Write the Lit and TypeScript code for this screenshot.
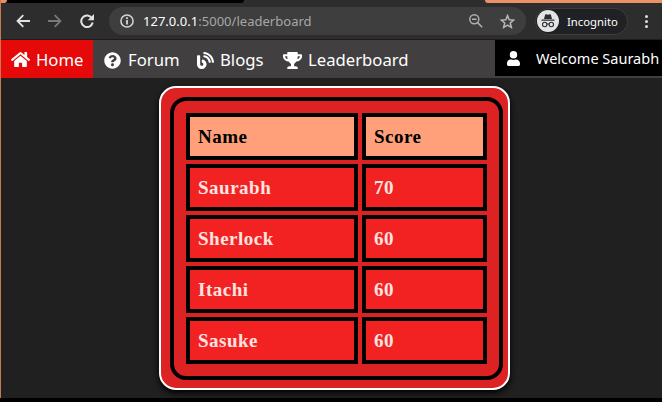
import { LitElement, html, css, svg } from "lit";
import { customElement } from "lit/decorators.js";

const icons = {
  back: svg`<path d="M14 7H1.5M7.3 1.2L1.5 7l5.8 5.8" fill="none" stroke="currentColor" stroke-width="1.8"/>`,
  forward: svg`<path d="M0 7h12.5M6.7 1.2L12.5 7l-5.8 5.8" fill="none" stroke="currentColor" stroke-width="1.8"/>`,
  reload: svg`<path d="M11.9 4.1A5.8 5.8 0 1 0 12.7 8.6" fill="none" stroke="currentColor" stroke-width="2"/><path d="M14 0v6.3H7.7z" fill="currentColor"/>`,
  info: svg`<circle cx="7" cy="7" r="6.1" fill="none" stroke="currentColor" stroke-width="1.5"/><path d="M7 6v4.6M7 3.3v1.6" stroke="currentColor" stroke-width="1.8"/>`,
  zoom: svg`<circle cx="5.3" cy="5.3" r="4.5" fill="none" stroke="currentColor" stroke-width="1.5"/><path d="M8.6 8.6l4.6 4.6M3 5.3h4.6" fill="none" stroke="currentColor" stroke-width="1.5"/>`,
  star: svg`<path d="M7 1.5l1.6 3.9 4.2.3-3.2 2.7 1 4.1L7 10.3l-3.6 2.2 1-4.1L1.2 5.7l4.2-.3z" fill="none" stroke="currentColor" stroke-width="1.4"/>`,
  spy: svg`<circle cx="11" cy="11" r="11" fill="#e4e4e4"/><path d="M7 9l1.1-4.2q.3-.8 1.1-.5l1.8.5 1.800-.5q.8-.3 1.100.5L15 9zM4.500 9.600h13v1.200h-13z" fill="#2b2d30"/><circle cx="7.7" cy="14.5" r="2.2" fill="none" stroke="#2b2d30" stroke-width="1.1"/><circle cx="14.3" cy="14.5" r="2.2" fill="none" stroke="#2b2d30" stroke-width="1.1"/><path d="M9.9 14.2q1.1-.7 2.2 0" fill="none" stroke="#2b2d30"/>`,
  home: svg`<path d="M280.37 148.26L96 300.11V464a16 16 0 0 0 16 16l112.06-.29a16 16 0 0 0 15.92-16V368a16 16 0 0 1 16-16h64a16 16 0 0 1 16 16v95.64a16 16 0 0 0 16 16.05L464 480a16 16 0 0 0 16-16V300L295.67 148.26a12.19 12.19 0 0 0-15.3 0zM571.6 251.47L488 182.56V44.05a12 12 0 0 0-12-12h-56a12 12 0 0 0-12 12v72.61L318.47 43a48 48 0 0 0-61 0L4.34 251.47a12 12 0 0 0-1.6 16.9l25.5 31A12 12 0 0 0 45.15 301l235.22-193.74a12.19 12.19 0 0 1 15.3 0L530.9 301a12 12 0 0 0 16.9-1.6l25.5-31a12 12 0 0 0-1.7-16.93z" fill="currentColor"/>`,
  question: svg`<path d="M504 256c0 137-111 248-248 248S8 393 8 256C8 119.1 119 8 256 8s248 111.1 248 248zM262.7 90c-54.5 0-89.3 23-116.5 63.8-3.5 5.3-2.4 12.4 2.7 16.3l34.7 26.3c5.2 3.9 12.6 3 16.7-2.1 17.9-22.7 30.1-35.8 57.3-35.8 20.4 0 45.7 13.1 45.7 33 0 15-12.4 22.7-32.5 34C247.1 238.5 216 254.9 216 296v4c0 6.6 5.4 12 12 12h56c6.6 0 12-5.4 12-12v-1.3c0-28.5 83.2-29.6 83.2-106.7 0-58-60.2-102-116.5-102zM256 338c-25.4 0-46 20.6-46 46s20.6 46 46 46 46-20.6 46-46-20.6-46-46-46z" fill="currentColor" fill-rule="evenodd"/>`,
  blog: svg`<path d="M172.2 226.8c-14.6-2.9-28.2 8.9-28.2 23.8V301c0 10.2 7.1 18.4 16.7 22 18.2 6.8 31.3 24.4 31.3 45 0 26.5-21.5 48-48 48s-48-21.5-48-48V120c0-13.3-10.7-24-24-24H24c-13.3 0-24 10.7-24 24v248c0 89.5 82.1 160.2 175 140.7 54.4-11.4 98.3-55.4 109.7-109.7 17.4-82.9-37-157.2-112.5-172.2zM209 0c-9.2-.5-17 6.8-17 16v31.6c0 8.5 6.6 15.5 15 15.9 129.4 7 233.4 112 240.9 241.5.5 8.4 7.5 15 15.9 15h32.1c9.2 0 16.5-7.8 16-17C503.4 139.8 372.2 8.6 209 0zm.3 96c-9.3-.7-17.3 6.7-17.3 16.1v32.1c0 8.4 6.5 15.3 14.8 15.9 76.8 6.3 138 68.2 144.9 145.2.8 8.3 7.6 14.7 15.9 14.7h32.2c9.3 0 16.8-8 16.1-17.3-8.4-110.1-96.5-198.2-206.6-206.7z" fill="currentColor"/>`,
  trophy: svg`<path d="M552 64H448V24c0-13.3-10.7-24-24-24H152c-13.3 0-24 10.7-24 24v40H24C10.7 64 0 74.7 0 88v56c0 35.7 22.5 72.4 61.9 100.7 31.5 22.7 69.8 37.1 110 41.7C203.3 338.5 240 360 240 360v72h-48c-35.3 0-64 20.7-64 56v12c0 6.6 5.4 12 12 12h296c6.6 0 12-5.4 12-12v-12c0-35.3-28.7-56-64-56h-48v-72s36.7-21.5 68.1-73.6c40.3-4.6 78.6-19 110-41.7 39.3-28.3 61.9-65 61.9-100.7V88c0-13.3-10.7-24-24-24zM99.3 192.8C74.9 175.2 64 155.6 64 144v-16h64.2c1 32.6 5.8 61.2 12.8 86.2-15.1-5.2-29.2-12.4-41.7-21.4zM512 144c0 16.1-17.7 36.1-35.3 48.8-12.5 9-26.7 16.2-41.8 21.4 7-25 11.8-53.6 12.8-86.2H512v16z" fill="currentColor"/>`,
  user: svg`<path d="M224 256a128 128 0 1 0 0-256 128 128 0 1 0 0 256zm89.6 32h-16.7a174 174 0 0 1-145.800 0h-16.700C60.200 288 0 348.200 0 422.400V464a48 48 0 0 0 48 48h352a48 48 0 0 0 48-48v-41.600c0-74.200-60.200-134.400-134.400-134.400z" fill="currentColor"/>`,
};

const icon = (name: keyof typeof icons, cls: string, box: string) =>
  html`<svg class=${cls} viewBox=${box} aria-hidden="true">${icons[name]}</svg>`;

@customElement("browser-bar")
class BrowserBar extends LitElement {
  static styles = css`
    :host { display: block; font-family: "Noto Sans", sans-serif; }
    svg { display: block; flex: none; }
    .tabs { display: flex; height: 3px; background: #2d2d2d; }
    .edgewrap { width: 243px; background: #000; border-radius: 0 0 4px 0; }
    .edge { width: 6px; height: 3px; background: #e78f69; border-radius: 0 0 5px 0; }
    .frame { margin-left: auto; width: 177px; background: #ec9067; border-radius: 0 0 0 5px; }
    .bar { display: flex; align-items: center; height: 36px; background: #2d2d2d; border-bottom: 1px solid #1c1c1c; color: #e2e2e2; padding-left: 15px; }
    .arrow { width: 14px; height: 14px; }
    .dim { color: #787878; margin-left: 18px; }
    .reload { width: 14px; height: 14px; margin-left: 18px; }
    .address { display: flex; align-items: center; box-sizing: border-box; width: 417px; height: 28px; margin-left: 15px; padding: 0 11px; border-radius: 14px; background: #3e3e3e; }
    .info { width: 14px; height: 14px; color: #d6d6d6; }
    .url { margin-left: 9px; font-size: 13px; line-height: 20px; letter-spacing: 0.02px; color: #a7a7a7; white-space: nowrap; }
    .host { color: #fff; }
    .zoom { width: 14px; height: 14px; margin-left: auto; color: #b0b0b0; }
    .star { width: 15px; height: 15px; margin-left: 17px; color: #b8b8b8; }
    .mode { display: flex; align-items: center; box-sizing: border-box; width: 93px; height: 27px; margin-left: 9px; padding-left: 1px; border: 1px solid #3d3d3d; border-radius: 14px; background: #202124; font-size: 11.3px; color: #fff; }
    .spy { width: 22px; height: 22px; margin-right: 8px; }
    .dots { display: grid; gap: 2px; margin-left: 17px; }
    .dot { width: 3px; height: 3px; border-radius: 50%; background: #dedede; }
  `;
  render() {
    return html`
      <div class="tabs"><div class="edgewrap"><div class="edge"></div></div><div class="frame"></div></div>
      <div class="bar">
        ${icon("back", "arrow", "0 0 14 14")}
        ${icon("forward", "arrow dim", "0 0 14 14")}
        ${icon("reload", "reload", "0 0 14 14")}
        <div class="address">
          ${icon("info", "info", "0 0 14 14")}
          <span class="url"><span class="host">127.0.0.1</span>:5000/leaderboard</span>
          ${icon("zoom", "zoom", "0 0 14 14")}
          ${icon("star", "star", "0 0 14 14")}
        </div>
        <div class="mode">${icon("spy", "spy", "0 0 22 22")}<span>Incognito</span></div>
        <div class="dots"><i class="dot"></i><i class="dot"></i><i class="dot"></i></div>
      </div>`;
  }
}

@customElement("site-nav")
class SiteNav extends LitElement {
  static styles = css`
    :host { display: flex; height: 38px; background: #413f40; color: #fff; font: 16.7px/38px "Noto Sans", sans-serif; white-space: nowrap; }
    svg { display: block; flex: none; }
    .link { display: flex; align-items: center; box-sizing: border-box; padding-left: 11px; }
    .link span { padding-top: 2px; }
    .home { width: 92px; padding-left: 10px; background: #e50909; }
    .forum { width: 94px; }
    .blogs { width: 85px; padding-left: 10px; }
    .house { width: 19px; height: 17px; margin-right: 6px; }
    .round { width: 17px; height: 17px; margin-right: 7px; margin-top: 2px; }
    .feed { width: 17px; height: 17px; margin-right: 6px; margin-top: 2px; }
    .cup { width: 19px; height: 17px; margin-right: 6px; margin-top: 2px; }
    .user { display: flex; align-items: center; box-sizing: border-box; width: 167px; height: 36px; margin-left: auto; padding-left: 12px; background: #000; font-size: 14.5px; }
    .person { width: 13px; height: 15px; margin-right: 16px; }
  `;
  render() {
    return html`
      <a class="link home">${icon("home", "house", "0 0 576 512")}<span>Home</span></a>
      <a class="link forum">${icon("question", "round", "0 0 512 512")}<span>Forum</span></a>
      <a class="link blogs">${icon("blog", "feed", "0 0 512 512")}<span>Blogs</span></a>
      <a class="link">${icon("trophy", "cup", "0 0 576 512")}<span>Leaderboard</span></a>
      <div class="user">${icon("user", "person", "0 0 448 512")}<span>Welcome Saurabh</span></div>`;
  }
}

@customElement("score-board")
class ScoreBoard extends LitElement {
  static styles = css`
    :host { display: block; box-sizing: border-box; width: 351px; height: 304px; padding: 9px 5px 8px 9px; border: 2px solid #fff; border-radius: 17px; background: #dc2222; box-shadow: 0 3px 6px #000; }
    .table { display: grid; grid-template-columns: 172px 125px; grid-auto-rows: 47px; gap: 4px; padding: 12px; border: 4px solid #000; border-radius: 16px; font: bold 19px/40px "Liberation Serif", serif; letter-spacing: 0.5px; }
    .cell { box-sizing: border-box; border: 4px solid #000; padding-left: 8px; background: #f32222; color: #ffe4e1; }
    .head { background: #ffa07a; color: #000; }
  `;
  rows = [["Saurabh", 70], ["Sherlock", 60], ["Itachi", 60], ["Sasuke", 60]];
  render() {
    return html`<div class="table">
      <div class="cell head">Name</div><div class="cell head">Score</div>
      ${this.rows.map(([name, score]) => html`<div class="cell">${name}</div><div class="cell">${score}</div>`)}
    </div>`;
  }
}

@customElement("app-root")
class AppRoot extends LitElement {
  static styles = css`
    :host { display: block; height: 402px; overflow: hidden; background: #202020; }
    .page { display: flex; flex-direction: column; box-sizing: border-box; height: 358px; border-left: 1px solid #c97850; }
    .window { border-left: 1px solid #c97850; }
    .main { flex: 1; padding: 8px 0 0 158px; }
    .bottom { height: 4px; background: #000; }
  `;
  render() {
    return html`
      <div class="window"><browser-bar></browser-bar></div>
      <div class="page"><site-nav></site-nav><div class="main"><score-board></score-board></div></div>
      <div class="bottom"></div>`;
  }
}
